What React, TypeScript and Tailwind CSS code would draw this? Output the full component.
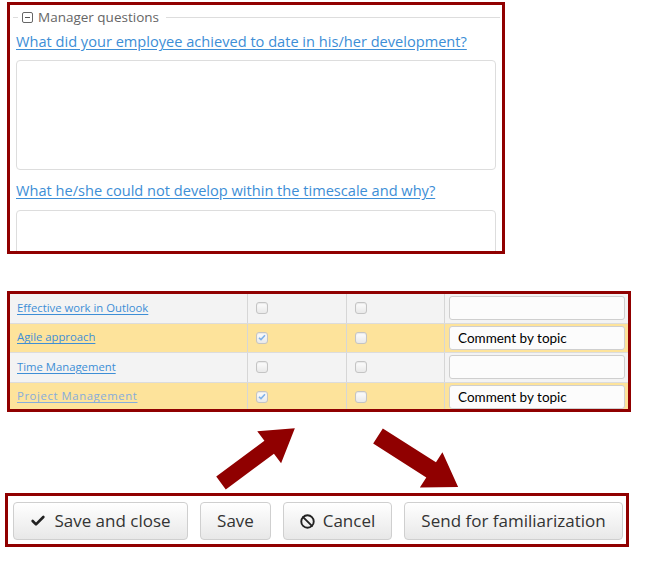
import { Check, Ban } from 'lucide-react';

const rows = [
  { topic: 'Effective work in Outlook', checked: false, comment: '', faded: false },
  { topic: 'Agile approach', checked: true, comment: 'Comment by topic', faded: false },
  { topic: 'Time Management', checked: false, comment: '', faded: false },
  { topic: 'Project Management', checked: true, comment: 'Comment by topic', faded: true },
];

function Box({ checked }: { checked: boolean }) {
  return (
    <span className="flex h-[12px] w-[12px] items-center justify-center rounded-[3px] border border-[#c4c4c4] bg-gradient-to-b from-[#fdfdfd] to-[#e9e9e9] shadow-[inset_0_1px_1px_rgba(0,0,0,0.08)]">
      {checked && (
        <svg width="8" height="7" viewBox="0 0 8 7">
          <path d="M1 3.8 L3 5.6 L7 1.2" fill="none" stroke="#7fb2ea" strokeWidth="1.6" />
        </svg>
      )}
    </span>
  );
}

function Arrow({ x, y, angle, len, w, hw, hl }: { x: number; y: number; angle: number; len: number; w: number; hw: number; hl: number }) {
  const b = len - hl;
  const pts = `0,${-w / 2} ${b},${-w / 2} ${b},${-hw / 2} ${len},0 ${b},${hw / 2} ${b},${w / 2} 0,${w / 2}`;
  return (
    <g transform={`translate(${x} ${y}) rotate(${angle})`}>
      <polygon points={pts} fill="#900000" />
    </g>
  );
}

export default function App() {
  return (
    <div className="h-[564px] w-[663px] overflow-hidden bg-white font-['Open_Sans',sans-serif]">
      {/* manager questions */}
      <div className="ml-[7px] mt-[2px] h-[252px] w-[498px] overflow-hidden border-[3px] border-[#900000] pl-[6px] pr-[6px]">
        <div className="-ml-[3px] -mr-[4px] mt-[2px] flex h-5 items-center">
          <span className="h-px w-[5px] bg-[#ddd]" />
          <span className="ml-[4px] flex h-[11px] w-[11px] items-center justify-center rounded-[2px] border border-[#666]">
            <span className="h-px w-[5px] bg-[#555]" />
          </span>
          <span className="ml-[5px] text-[13.5px] leading-5 text-[#666]">Manager questions</span>
          <span className="ml-[7px] h-px flex-1 bg-[#ddd]" />
        </div>
        <a className="mt-[4px] block text-[14.6px] leading-5 text-[#3d8ed6] underline underline-offset-2" href="#">
          What did your employee achieved to date in his/her development?
        </a>
        <div className="mt-[9px] h-[110px] rounded-[4px] border border-[#ddd] bg-white" />
        <a className="mt-[10px] block text-[14.6px] leading-5 text-[#3d8ed6] underline underline-offset-2" href="#">
          What he/she could not develop within the timescale and why?
        </a>
        <div className="mt-[10px] h-[110px] rounded-[4px] border border-[#ddd] bg-white" />
      </div>

      {/* topics table */}
      <div className="ml-[7px] mt-[37px] h-[121px] w-[624px] overflow-hidden border-[3px] border-[#900000]">
        {rows.map((r, i) => (
          <div
            key={r.topic}
            className={`flex h-[29.5px] border-b border-[#dcdcdc] ${i % 2 === 1 ? 'bg-[#fde39b]' : 'bg-[#f3f3f3]'}`}
          >
            <div className="flex w-[238px] items-center border-r border-[#d6d6d6] pl-[7px]">
              <a
                href="#"
                className={`text-[11.3px] underline underline-offset-2 ${r.faded ? 'tracking-[0.6px] text-[#86acdc]' : 'text-[#3d8ed6]'}`}
              >
                {r.topic}
              </a>
            </div>
            <div className="flex w-[99px] items-center border-r border-[#d6d6d6] pl-[8px]">
              <Box checked={r.checked} />
            </div>
            <div className="flex w-[98px] items-center border-r border-[#d6d6d6] pl-[8px]">
              <Box checked={false} />
            </div>
            <div className="flex flex-1 items-center pl-[4px] pr-[3px]">
              <div className="flex h-[24px] w-full items-center rounded-[3px] border border-[#cfcfcf] bg-[#fcfcfc] pl-[8px] font-['Lato',sans-serif] text-[13.5px] text-black">
                {r.comment}
              </div>
            </div>
          </div>
        ))}
      </div>

      {/* arrows */}
      <svg className="block h-[81px] w-[663px]" viewBox="0 0 663 81">
        <Arrow x={221} y={71} angle={-36.6} len={92} w={16} hw={40} hl={32} />
        <Arrow x={378} y={24} angle={32.5} len={95} w={18} hw={42} hl={32} />
      </svg>

      {/* buttons */}
      <div className="ml-[5px] flex h-[54px] w-[624px] gap-[12px] border-[3px] border-[#900000] pl-[5px] pt-[6px]">
        <button className="flex h-[38px] w-[175px] items-center justify-center gap-[8px] rounded-[4px] border border-[#cfcfcf] bg-gradient-to-b from-white to-[#e8e8e8] text-[17px] text-[#333]">
          <Check size={16} strokeWidth={4} className="text-[#222]" />
          Save and close
        </button>
        <button className="flex h-[38px] w-[71px] items-center justify-center rounded-[4px] border border-[#cfcfcf] bg-gradient-to-b from-white to-[#e8e8e8] text-[17px] text-[#333]">
          Save
        </button>
        <button className="flex h-[38px] w-[109px] items-center justify-center gap-[8px] rounded-[4px] border border-[#cfcfcf] bg-gradient-to-b from-white to-[#e8e8e8] text-[17px] text-[#333]">
          <Ban size={15} strokeWidth={3} className="text-[#222]" />
          Cancel
        </button>
        <button className="flex h-[38px] w-[219px] items-center justify-center rounded-[4px] border border-[#cfcfcf] bg-gradient-to-b from-white to-[#e8e8e8] text-[17px] text-[#333]">
          Send for familiarization
        </button>
      </div>
    </div>
  );
}
